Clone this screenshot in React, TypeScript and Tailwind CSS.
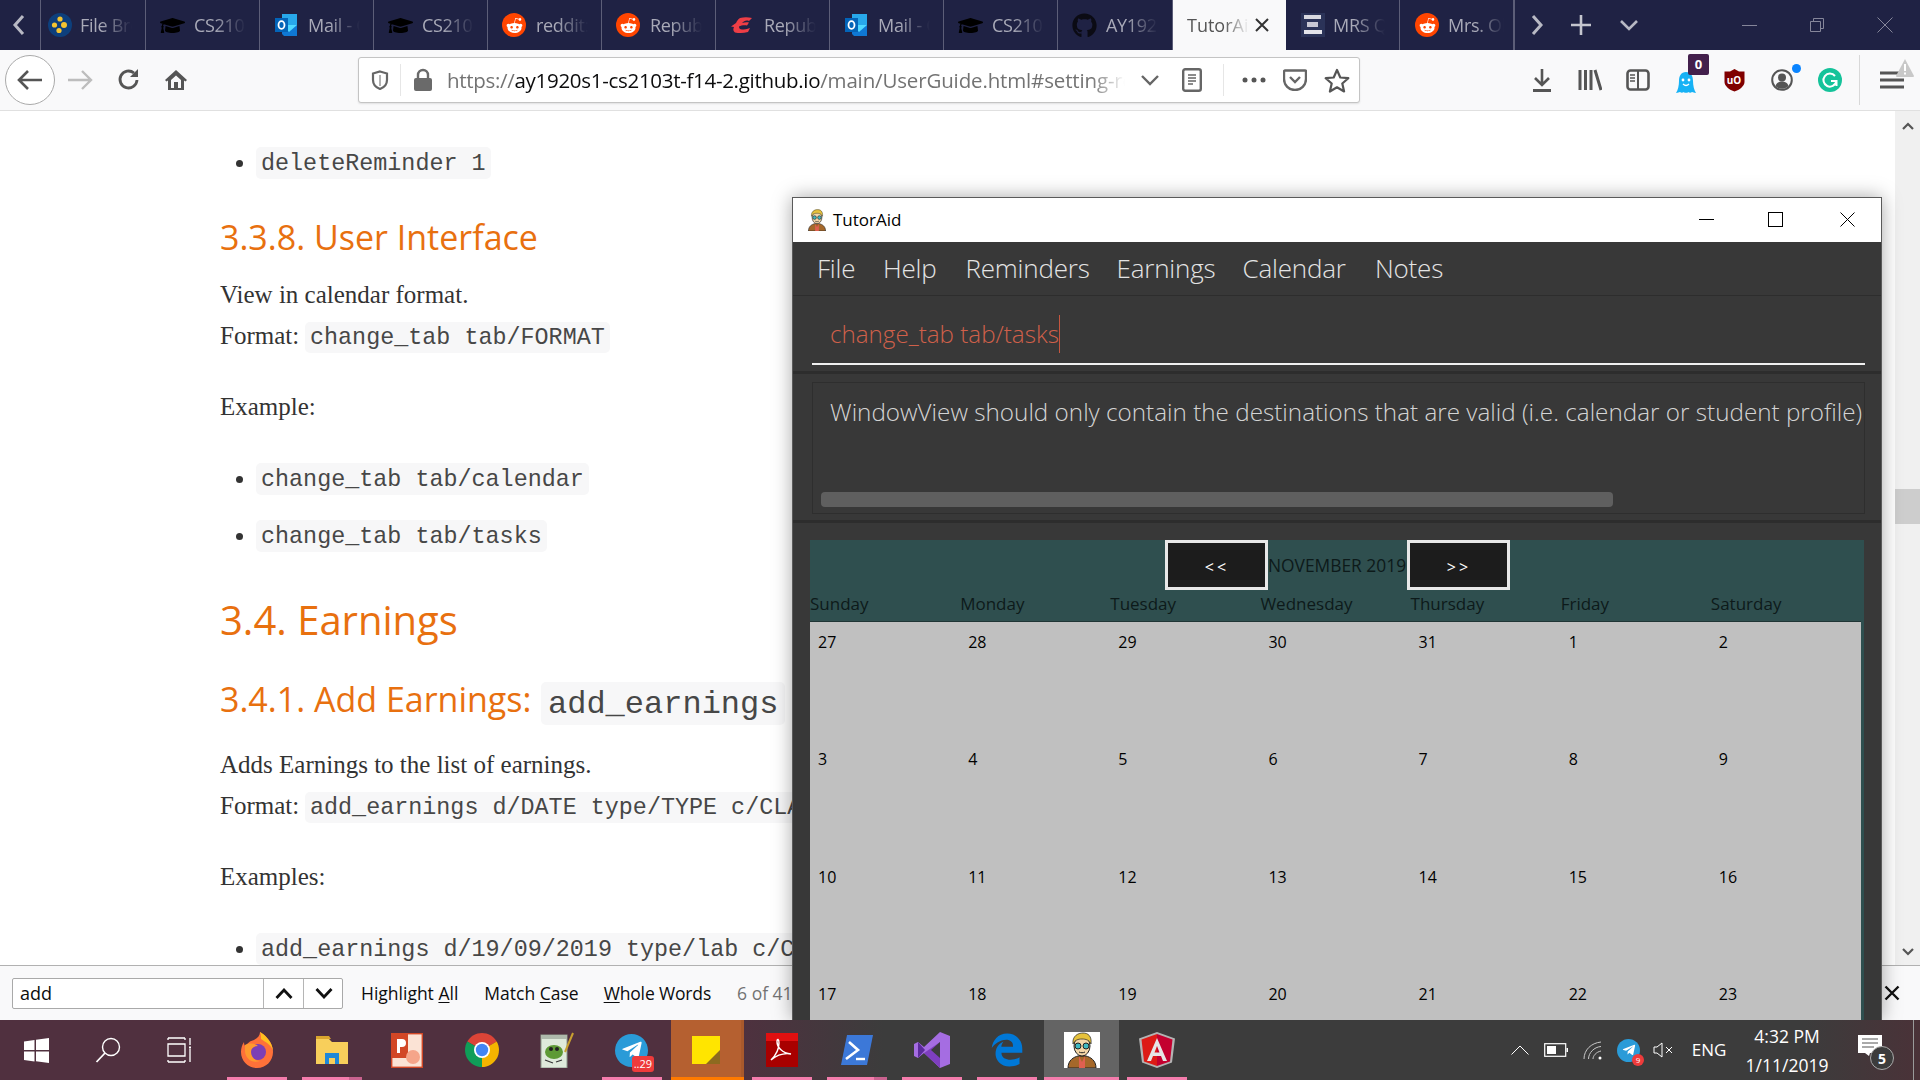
import React from "react";
import { FaGraduationCap, FaRedditAlien, FaGithub, FaTelegramPlane, FaEdgeLegacy } from "react-icons/fa";

const Svg = ({ w, h = w, vb, children, cls = "" }: { w: number; h?: number; vb?: string; children: React.ReactNode; cls?: string }) => (
  <svg width={w} height={h} viewBox={vb ?? `0 0 ${w} ${h}`} fill="none" className={`block shrink-0 ${cls}`}>{children}</svg>
);

const Reddit = () => (
  <span className="w-[24px] h-[24px] rounded-full bg-[#ff4500] flex items-center justify-center shrink-0"><FaRedditAlien className="text-white text-[17px]" /></span>
);
const Outlook = () => (
  <Svg w={24} h={24}>
    <path d="M8 1h15v11H8z" fill="#28a8ea" />
    <path d="M8 12h15v11H10l-2-2z" fill="#0f78d4" />
    <path d="M8 12l15 0-8 7z" fill="#50d9ff" />
    <rect x="1" y="5" width="13" height="14" fill="#0364b8" />
    <ellipse cx="7.5" cy="12" rx="3" ry="3.8" stroke="#fff" strokeWidth="1.8" />
  </Svg>
);
const Cap = () => <FaGraduationCap className="text-black text-[25px] shrink-0" />;
const FileBrowser = () => (
  <Svg w={24} h={24}>
    <circle cx="12" cy="12" r="12" fill="#0d3f7c" />
    <circle cx="12" cy="6" r="2.6" fill="#f4c430" /><circle cx="6.5" cy="12" r="2.6" fill="#f4c430" /><circle cx="16" cy="12" r="3" fill="#f4c430" /><circle cx="11" cy="17.5" r="2.6" fill="#f4c430" />
  </Svg>
);
const Era = () => (
  <Svg w={22} h={16}>
    <path d="M9 1c4-1 8-1 12 0l-3 3C15 3 13 4 11 6c3-1 5-1 7-.500l-2 3c-3-.500-6 0-8 1 0 2 1 3 3 3s5-.500 8-1.500l-2 4c-5 1-10 1.500-13 .500C2 14 2 12 3 10L0 9.500 5 6c1-2 2-4 4-5z" fill="#ee3e46" />
  </Svg>
);
const MrsIcon = () => (
  <Svg w={24} h={24}>
    <rect width="24" height="24" fill="#2b3358" />
    <rect x="3" y="2" width="17" height="4" fill="#d8d8e0" /><rect x="6" y="9" width="11" height="5" fill="#c8c8d4" /><rect x="3" y="17" width="18" height="4" fill="#e4e4ea" />
  </Svg>
);

const tabs = [
  { n: "File Browser", i: <FileBrowser />, w: 105 },
  { n: "CS2103T", i: <Cap />, w: 114 },
  { n: "Mail - Outlook", i: <Outlook />, w: 114 },
  { n: "CS2103T", i: <Cap />, w: 114 },
  { n: "reddit: the", i: <Reddit />, w: 114 },
  { n: "Republic", i: <Reddit />, w: 114 },
  { n: "Republic", i: <Era />, w: 114 },
  { n: "Mail - Outlook", i: <Outlook />, w: 114 },
  { n: "CS2103T", i: <Cap />, w: 114 },
  { n: "AY1920S1", i: <FaGithub className="text-[#0b0b14] text-[25px] shrink-0" />, w: 115 },
];

const Tab = ({ n, i, w }: { n: string; i: React.ReactNode; w: number }) => (
  <div style={{ width: w }} className={`h-[50px] shrink-0 flex items-center border-r border-[#5c5e78] ${w === 105 ? "pl-[6px]" : "pl-[13px]"}`}>
    <span className="w-[24px] ml-[1px] flex justify-center">{i}</span>
    <span className={`w-[52px] overflow-hidden whitespace-nowrap text-[18px] tracking-[-0.3px] text-[#a9aab8] [mask-image:linear-gradient(to_right,black_40%,transparent)] ${w === 105 ? "ml-[8px]" : "ml-[10px]"}`}>{n}</span>
  </div>
);

const TabBar = () => (
  <div className="h-[50px] bg-[#1f2244] flex shrink-0">
    <div className="w-[41px] flex items-center justify-center border-r border-[#5c5e78] pr-[3px]">
      <Svg w={14} h={22}><path d="M11 2L3 11l8 9" stroke="#b8b9c4" strokeWidth="3" /></Svg>
    </div>
    {tabs.map((t, k) => <Tab key={k} {...t} />)}
    <div className="w-[113px] h-[50px] shrink-0 bg-[#f9f9fa] flex items-center pl-[14px]">
      <span className="w-[62px] overflow-hidden whitespace-nowrap text-[18px] text-[#555] [mask-image:linear-gradient(to_right,black_60%,transparent)]">TutorAid</span>
      <Svg w={16} h={16} cls="ml-[5px]"><path d="M2 2l12 12M14 2L2 14" stroke="#333" strokeWidth="2" /></Svg>
    </div>
    <div className="w-[114px] h-[50px] shrink-0 flex items-center pl-[15px] border-r border-[#5c5e78]">
      <MrsIcon />
      <span className="ml-[8px] w-[52px] overflow-hidden whitespace-nowrap text-[18px] tracking-[-0.3px] text-[#a9aab8] [mask-image:linear-gradient(to_right,black_40%,transparent)]">MRS Quiz</span>
    </div>
    <div className="w-[115px] h-[50px] shrink-0 flex items-center pl-[15px] border-r-2 border-[#5c5e78]">
      <Reddit />
      <span className="ml-[9px] w-[56px] overflow-hidden whitespace-nowrap text-[18px] tracking-[-0.3px] text-[#a9aab8] [mask-image:linear-gradient(to_right,black_50%,transparent)]">Mrs. Obama</span>
    </div>
    <div className="w-[22px] ml-[11px] flex items-center justify-center"><Svg w={14} h={22}><path d="M3 2l8 9-8 9" stroke="#b8b9c4" strokeWidth="3" /></Svg></div>
    <div className="w-[24px] ml-[21px] flex items-center justify-center"><Svg w={22} h={22}><path d="M11 1v20M1 11h20" stroke="#c4c5ce" strokeWidth="2.6" /></Svg></div>
    <div className="w-[24px] ml-[24px] flex items-center justify-center"><Svg w={20} h={12}><path d="M2 2l8 8 8-8" stroke="#b8b9c4" strokeWidth="2.6" /></Svg></div>
    <div className="ml-[101px] flex items-center"><span className="w-[15px] h-[1px] bg-[#85869a]" /></div>
    <div className="ml-[53px] flex items-center"><Svg w={14} h={14}><path d="M3.5 3V.5h10v10H11M.5 3.5h10v10H.5z" stroke="#85869a" /></Svg></div>
    <div className="ml-[53px] flex items-center"><Svg w={16} h={16}><path d="M.5.5l15 15M15.5.5l-15 15" stroke="#85869a" /></Svg></div>
  </div>
);

const Slot = ({ w, children, cls = "" }: { w: number; children?: React.ReactNode; cls?: string }) => (
  <div style={{ width: w }} className={`shrink-0 flex items-center justify-center ${cls}`}>{children}</div>
);

const Toolbar = () => (
  <div className="h-[61px] bg-[#f9f9fa] border-b border-[#e0e0e0] flex items-center shrink-0 relative">
    <div className="ml-[5px] w-[50px] h-[50px] rounded-full border border-[#aaa] bg-white flex items-center justify-center shrink-0">
      <Svg w={26} h={22}><path d="M25 11H3M11 2l-9 9 9 9" stroke="#555" strokeWidth="2.6" /></Svg>
    </div>
    <Slot w={50}><Svg w={26} h={22}><path d="M1 11h22M15 2l9 9-9 9" stroke="#bdbdbd" strokeWidth="2.4" /></Svg></Slot>
    <Slot w={47}><Svg w={24} h={24}><path d="M20 12a8.5 8.5 0 1 1-3-7" stroke="#555" strokeWidth="2.8" /><path d="M21 1v8h-8z" fill="#555" /></Svg></Slot>
    <Slot w={48}><Svg w={24} h={24}><path d="M12 2L1 12l1.5 1.5L4 12.4V22h16v-9.6l1.5 1.1L23 12zM7 20v-8l5-4.5 5 4.5v8h-3v-6h-4v6z" fill="#555" /></Svg></Slot>
    <div className="ml-[158px] w-[1002px] h-[46px] bg-white border border-[#c4c4c4] rounded-[3px] shadow-[0_1px_2px_rgba(0,0,0,0.1)] flex items-center shrink-0">
      <Slot w={41}><Svg w={18} h={20}><path d="M9 1.5l7 2v6.5c0 4.5-3 7.5-7 9-4-1.500-7-4.500-7-9V3.500z" stroke="#666" strokeWidth="2.2" /><path d="M9 5v11" stroke="#666" strokeWidth="1" /></Svg></Slot>
      <span className="w-[1px] h-[32px] bg-[#e6e6e6]" />
      <Slot w={43}><Svg w={20} h={24}><path d="M5 11V7a5 5 0 0 1 10 0v4" stroke="#6a6a6a" strokeWidth="2.4" /><rect x="1" y="10" width="18" height="13" rx="2" fill="#6a6a6a" /></Svg></Slot>
      <div className="ml-[3px] w-[678px] overflow-hidden whitespace-nowrap text-[20.5px] tracking-[-0.3px] text-[#737373] [mask-image:linear-gradient(to_right,black_95%,transparent)]">https://<span className="text-[#0c0c0d]">ay1920s1-cs2103t-f14-2.github.io</span><span className="tracking-[-0.15px]">/main/UserGuide.html#setting-reminders</span></div>
      <Slot w={50}><Svg w={18} h={11}><path d="M1 1l8 8 8-8" stroke="#666" strokeWidth="2.4" /></Svg></Slot>
      <Slot w={34}><Svg w={20} h={24}><rect x="1.200" y="1.200" width="17.600" height="21.600" rx="2" stroke="#666" strokeWidth="2.4" /><path d="M6 7h8M6 10h8M6 13h8M6 16h5" stroke="#666" strokeWidth="1.300" /></Svg></Slot>
      <span className="ml-[14px] w-[1px] h-[32px] bg-[#e6e6e6]" />
      <Slot w={59}><Svg w={24} h={6}><circle cx="3" cy="3" r="2.500" fill="#555" /><circle cx="12" cy="3" r="2.500" fill="#555" /><circle cx="21" cy="3" r="2.500" fill="#555" /></Svg></Slot>
      <Slot w={24}><Svg w={24} h={22}><path d="M2 1.500h20a1 1 0 0 1 1 1V10A11 11 0 0 1 1 10V2.500a1 1 0 0 1 1-1z" stroke="#666" strokeWidth="2.400" /><path d="M7 8l5 5 5-5" stroke="#666" strokeWidth="2.400" /></Svg></Slot>
      <Slot w={41} cls="ml-[9px]"><Svg w={26} h={25}><path d="M13 2l3.300 7.500 8 .7-6 5.300 1.800 8L13 19.300 5.900 23.500l1.800-8-6-5.300 8-.7z" stroke="#555" strokeWidth="2.200" strokeLinejoin="round" /></Svg></Slot>
    </div>
    <div className="flex-1" />
    <Slot w={48}><Svg w={20} h={24}><path d="M10 1v15M3 10l7 7 7-7" stroke="#555" strokeWidth="2.600" /><path d="M1 22.500h18" stroke="#555" strokeWidth="3" /></Svg></Slot>
    <Slot w={48}><Svg w={24} h={22}><path d="M2 1v20M7.500 1v20M13 1v20M17 1l6 20" stroke="#555" strokeWidth="3" /></Svg></Slot>
    <Slot w={48}><Svg w={24} h={22}><rect x="1.500" y="1.500" width="21" height="19" rx="3" stroke="#555" strokeWidth="2.600" /><path d="M12 2v18" stroke="#555" strokeWidth="2" /><path d="M4 6h5M4 9h5M4 12h5" stroke="#555" strokeWidth="1.300" /></Svg></Slot>
    <Slot w={48}>
      <div className="relative w-[20px] h-[24px] mt-[6px]">
        <Svg w={20} h={24}><path d="M10 1c5 0 7 4 7 9 0 4 1 9 3 12-2 0-3-1-4-1-1 1-3 1-3 0-1 1-5 1-6 0 0 1-2 1-3 0-1 0-2 1-4 1 2-3 3-8 3-12 0-5 2-9 7-9z" fill="#17b2f5" /><circle cx="7" cy="9" r="1.400" fill="#fff" /><circle cx="13" cy="9" r="1.400" fill="#fff" /><path d="M7 13c2 2 4 2 6 0" stroke="#fff" strokeWidth="1.200" /></Svg>
        <span className="absolute left-[12px] top-[-17px] w-[21px] h-[21px] bg-[#43204c] rounded-[2px] text-white text-[13px] font-bold flex items-center justify-center">0</span>
      </div>
    </Slot>
    <Slot w={48}>
      <div className="relative w-[21px] h-[24px]">
        <Svg w={21} h={24}><path d="M10.500 1L15 3.500h5.500V14c0 4-5 8-10 9.500C5.500 22 .5 18 .5 14V3.500H6z" fill="#800000" /></Svg>
        <span className="absolute inset-0 flex items-center justify-center text-white text-[10px] font-bold">uO</span>
      </div>
    </Slot>
    <Slot w={48}>
      <div className="relative">
        <Svg w={22} h={22}><circle cx="11" cy="11" r="9.800" stroke="#555" strokeWidth="2" /><circle cx="11" cy="8.500" r="4" fill="#555" /><path d="M4.500 17c1-3.500 4-4.500 6.500-4.500s5.500 1 6.500 4.500c-2 2-4 2.700-6.500 2.700S6.500 19 4.500 17z" fill="#555" /></Svg>
        <span className="absolute right-[-8px] top-[-5px] w-[9px] h-[9px] rounded-full bg-[#0a84ff]" />
      </div>
    </Slot>
    <Slot w={48}><Svg w={24} h={24}><circle cx="12" cy="12" r="12" fill="#15c39a" /><path d="M17 8a6.500 6.500 0 1 0 1.300 5.500M13 13h5.500v5" stroke="#fff" strokeWidth="2" /></Svg></Slot>
    <span className="ml-[5px] w-[1px] h-[50px] bg-[#d8d8d8] shrink-0" />
    <Slot w={26} cls="ml-[19px] mr-[15px]"><Svg w={26} h={20}><path d="M1 3h24M1 10h24M1 17h24" stroke="#555" strokeWidth="3" /></Svg></Slot>
    <div className="absolute right-[6px] top-[9px]">
      <Svg w={18} h={18}><path d="M9 0l9 17a1 1 0 0 1-1 1H1a1 1 0 0 1-1-1z" fill="#c8c8c8" /><path d="M9 5v7M9 13.500v2" stroke="#fff" strokeWidth="2" /></Svg>
    </div>
  </div>
);

const Code = ({ children, cls = "" }: { children: React.ReactNode; cls?: string }) => (
  <code className={`font-['Liberation_Mono',monospace] bg-[#f7f7f8] rounded-[5px] text-[#474747] whitespace-nowrap ${cls}`}>{children}</code>
);
const Bullet = ({ children, mt }: { children: React.ReactNode; mt: string }) => (
  <div className={`flex items-center h-[32px] ${mt}`}>
    <span className="ml-[16px] mr-[13px] w-[7px] h-[7px] rounded-full bg-[#333] shrink-0" />
    <Code cls="h-[32px] leading-[34px] px-[5px] text-[23.4px]">{children}</Code>
  </div>
);
const P = ({ children, mt }: { children: React.ReactNode; mt: string }) => (
  <div className={`h-[34px] leading-[34px] font-['Liberation_Serif',serif] text-[25px] text-[#333] ${mt} whitespace-nowrap`}>{children}</div>
);
const Fmt = ({ children, mt }: { children: React.ReactNode; mt: string }) => (
  <div className={`h-[31px] flex items-center font-['Liberation_Serif',serif] text-[25px] text-[#333] ${mt} whitespace-nowrap`}>
    <span className="w-[85px] shrink-0 -mt-[4px]">Format:</span>
    <Code cls="h-[31px] leading-[33px] px-[5px] text-[23.4px]">{children}</Code>
  </div>
);

const Doc = () => (
  <div className="flex-1 min-w-0 bg-white overflow-hidden pl-[220px]">
    <Bullet mt="mt-[36px]">deleteReminder 1</Bullet>
    <div className="mt-[35px] h-[46px] leading-[46px] text-[34px] text-[#e8700f] whitespace-nowrap">3.3.8. User Interface</div>
    <P mt="mt-[18px]">View in calendar format.</P>
    <Fmt mt="mt-[10px]">change_tab tab/FORMAT</Fmt>
    <P mt="mt-[37px]">Example:</P>
    <Bullet mt="mt-[39px]">change_tab tab/calendar</Bullet>
    <Bullet mt="mt-[25px]">change_tab tab/tasks</Bullet>
    <div className="mt-[40px] h-[56px] leading-[56px] text-[40px] text-[#e8700f] whitespace-nowrap">3.4. Earnings</div>
    <div className="mt-[34px] h-[43px] flex items-center text-[34px] text-[#e8700f] whitespace-nowrap">
      <span className="w-[321px] shrink-0 -mt-[9px]">3.4.1. Add Earnings:</span>
      <Code cls="h-[43px] leading-[45px] px-[7px] text-[32px]">add_earnings</Code>
    </div>
    <P mt="mt-[23px]">Adds Earnings to the list of earnings.</P>
    <Fmt mt="mt-[10px]">add_earnings d/DATE type/TYPE c/CLASSID</Fmt>
    <P mt="mt-[37px]">Examples:</P>
    <Bullet mt="mt-[39px]">add_earnings d/19/09/2019 type/lab c/CS2103T</Bullet>
  </div>
);

const PageScroll = () => (
  <div className="w-[25px] bg-[#f0f0f0] flex flex-col items-center shrink-0">
    <Svg w={12} h={8} cls="mt-[11px]"><path d="M1 7l5-5 5 5" stroke="#555" strokeWidth="2.200" /></Svg>
    <div className="mt-[359px] w-full h-[35px] bg-[#cdcdcd]" />
    <div className="flex-1" />
    <Svg w={12} h={8} cls="mb-[9px]"><path d="M1 1l5 5 5-5" stroke="#555" strokeWidth="2.200" /></Svg>
  </div>
);

const Check = ({ a, u, b, ml, cls = "" }: { a: string; u: string; b: string; ml: string; cls?: string }) => (
  <span className={`${ml} ${cls} text-[17.5px] text-[#0c0c0d] whitespace-nowrap`}>{a}<span className="underline underline-offset-2">{u}</span>{b}</span>
);

const FindBar = () => (
  <div className="h-[55px] bg-[#f9f9fa] border-t border-[#b1b1b1] flex items-center shrink-0 relative">
    <div className="ml-[12px] w-[331px] h-[31px] bg-white border border-[#a9a9a9] rounded-[2px] flex items-center shrink-0">
      <span className="ml-[7px] flex-1 text-[18px] text-[#0c0c0d]">add</span>
      <Slot w={40} cls="h-full border-l border-[#b5b5b5]"><Svg w={18} h={11}><path d="M1.500 10L9 2l7.500 8" stroke="#111" strokeWidth="2.800" /></Svg></Slot>
      <Slot w={39} cls="h-full border-l border-[#b5b5b5] pl-[2px]"><Svg w={18} h={11}><path d="M1.500 1L9 9l7.500-8" stroke="#111" strokeWidth="2.800" /></Svg></Slot>
    </div>
    <Check ml="ml-[18px]" a="Highlight " u="A" b="ll" />
    <Check ml="ml-[26px]" a="Match " u="C" b="ase" />
    <Check ml="ml-[25px]" cls="tracking-[-0.15px]" a="" u="W" b="hole Words" />
    <span className="ml-[26px] text-[17.5px] text-[#737373] whitespace-nowrap">6 of 41</span>
    <div className="absolute right-[20px] top-[19px]"><Svg w={16} h={16}><path d="M1.500 1.500l13 13M14.500 1.500l-13 13" stroke="#111" strokeWidth="2.400" /></Svg></div>
  </div>
);

const Avatar = ({ s, bg = false }: { s: number; bg?: boolean }) => (
  <Svg w={s} h={s} vb="0 0 36 36">
    {bg && <rect width="36" height="36" fill="#fff" />}
    <path d="M4 36c0-8 6-11 10-12h8c4 1 10 4 10 12z" fill="#a5682a" stroke="#222" />
    <path d="M15 24l3 6 3-6v12h-6z" fill="#e06050" />
    <ellipse cx="18" cy="14" rx="8" ry="10" fill="#f3d6a8" stroke="#222" />
    <path d="M9 12C8 4 14 1 19 1s9 3 8 11c-2-4-5-5-9-5s-7 1-9 5z" fill="#e6c23c" stroke="#222" strokeWidth=".7" />
    <circle cx="14" cy="14" r="3" fill="#3fb8c0" stroke="#222" /><circle cx="22" cy="14" r="3" fill="#3fb8c0" stroke="#222" />
    <path d="M15 20c2 1 4 1 6 0" stroke="#222" />
  </Svg>
);

const menus = [
  { t: "File", w: 66 },
  { t: "Help", w: 82.5 },
  { t: "Reminders", w: 151 },
  { t: "Earnings", w: 126 },
  { t: "Calendar", w: 132.5 },
  { t: "Notes", w: 80 },
];
const rows = [
  [27, 28, 29, 30, 31, 1, 2],
  [3, 4, 5, 6, 7, 8, 9],
  [10, 11, 12, 13, 14, 15, 16],
  [17, 18, 19, 20, 21, 22, 23],
];
const days = ["Sunday", "Monday", "Tuesday", "Wednesday", "Thursday", "Friday", "Saturday"];

const TutorWindow = () => (
  <div className="absolute left-[792px] top-[197px] w-[1090px] h-[823px] z-10 bg-[#383838] border-l border-r border-t border-[#5a5a5a] shadow-[0_0_18px_rgba(0,0,0,0.35)] flex flex-col overflow-hidden">
    <div className="h-[44px] bg-white flex items-center shrink-0">
      <span className="ml-[13px]"><Avatar s={22} /></span>
      <span className="ml-[5px] text-[17px] text-black">TutorAid</span>
      <div className="flex-1" />
      <span className="w-[15px] h-[1px] bg-black -mt-[1px]" />
      <span className="ml-[54px] w-[15px] h-[15px] border border-black -mt-[1px]" />
      <span className="ml-[57px] mr-[26px] -mt-[1px]"><Svg w={15} h={15}><path d="M.5.5l14 14M14.500.5l-14 14" stroke="#000" /></Svg></span>
    </div>
    <div className="h-[54px] flex items-center pl-[24px] border-b border-[#2d2d2d] shrink-0">
      {menus.map((m) => (
        <span key={m.t} style={{ width: m.w }} className="shrink-0 text-[26px] font-light text-[#e4e4e4] whitespace-nowrap tracking-[-0.2px]">{m.t}</span>
      ))}
    </div>
    <div className="h-[78px] pl-[19px] pr-[16px] border-b-[3px] border-[#2d2d2d] shrink-0 flex flex-col">
      <div className="h-[69px] pt-[9px] border-b-2 border-[#f0f0f0] pl-[18px] flex items-center">
        <span className="text-[24.2px] font-light text-[#d0604a] whitespace-nowrap">change_tab tab/tasks</span>
        <span className="w-[1px] h-[38px] bg-[#c5563f]" />
      </div>
    </div>
    <div className="h-[149px] pt-[8px] pl-[19px] pr-[16px] border-b-[3px] border-[#2d2d2d] shrink-0">
      <div className="h-[132px] border border-[#2e2e2e] flex flex-col overflow-hidden">
        <div className="h-[58px] flex items-center pl-[17px] text-[24.25px] font-light text-[#d4d4d4] whitespace-nowrap">WindowView should only contain the destinations that are valid (i.e. calendar or student profile)</div>
        <div className="mt-[51px] ml-[8px] w-[792px] h-[15px] rounded-[4px] bg-[#5f5f5f]" />
      </div>
    </div>
    <div className="flex-1 min-h-0 pt-[17px] pl-[17px] pr-[17px] overflow-hidden">
      <div className="bg-[#2f4f4f] pr-[3px] h-full flex flex-col">
        <div className="h-[50px] flex items-stretch justify-center shrink-0 pl-[3px]">
          <div className="w-[103px] bg-[#1c1c1c] border-[3px] border-[#e8e8e8] flex items-center justify-center pt-[3px] pl-[2px] text-[16px] text-white tracking-[3px]">&lt;&lt;</div>
          <div className="w-[139px] flex items-center justify-center text-[17.4px] text-[#0d1a1a] whitespace-nowrap">NOVEMBER 2019</div>
          <div className="w-[103px] bg-[#1c1c1c] border-[3px] border-[#e8e8e8] flex items-center justify-center pt-[3px] pl-[2px] text-[16px] text-white tracking-[3px]">&gt;&gt;</div>
        </div>
        <div className="h-[32px] pb-[3px] grid grid-cols-7 items-center shrink-0 border-b border-[#1f3535]">
          {days.map((d) => <span key={d} className="text-[17px] text-[#0d1a1a] whitespace-nowrap">{d}</span>)}
        </div>
        <div className="bg-[#c0c0c0] flex flex-col">
          {rows.map((r, k) => (
            <div key={k} className="h-[117.3px] grid grid-cols-7 shrink-0">
              {r.map((n) => <span key={n} className="pl-[8px] pt-[8px] text-[16px] leading-[24px] text-black">{n}</span>)}
            </div>
          ))}
        </div>
      </div>
    </div>
  </div>
);

const Under = ({ dark = false }: { dark?: boolean }) => (
  <span className="absolute bottom-0 left-[8px] w-[60px] h-[3px] bg-[#f47cac]">
    {dark && <span className="absolute right-0 top-0 w-[13px] h-full bg-[#c9628f]" />}
  </span>
);
const TaskSlot = ({ children, active, cls = "", dark, under = true }: { children: React.ReactNode; active?: string; cls?: string; dark?: boolean; under?: boolean }) => (
  <div className={`relative w-[75px] h-[60px] shrink-0 flex items-center justify-center ${active ?? ""} ${cls}`}>
    {children}
    {under && <Under dark={dark} />}
  </div>
);

const Taskbar = () => (
  <div className="relative z-20 h-[60px] bg-[linear-gradient(to_right,#50303f_0%,#50303f_38%,#3c3c3c_46%,#3c3c3c_94%,#4a3238_100%)] flex shrink-0">
    <Slot w={72}><Svg w={25} h={25}><path d="M0 3.500L10.500 2v10H0zM12 1.800L25 0v12H12zM0 13.500h10.500v10L0 22zM12 13.500h13V25l-13-1.800z" fill="#fff" /></Svg></Slot>
    <Slot w={71}><Svg w={26} h={26}><circle cx="16" cy="10" r="8.500" stroke="#fff" strokeWidth="1.400" /><path d="M10 16L1.500 25" stroke="#fff" strokeWidth="1.800" /></Svg></Slot>
    <Slot w={71}><Svg w={24} h={26}><path d="M1 1h17M1 25h17M1 7h17v12H1zM1 3v-2M18 3v-2M1 25v-2M18 25v-2M23 1v7M23 12v13" stroke="#fff" strokeWidth="1.300" /><rect x="22" y="9.500" width="2" height="2" fill="#fff" /></Svg></Slot>
    <div className="w-[5px] shrink-0" />
    <TaskSlot>
      <Svg w={34} h={36}>
        <path d="M17 36C8 36 1 29 1 20c0-4 1-7 3-10 0 3 1 4 2 5 1-4 4-6 8-7 4-2 6-5 6-8 3 2 5 3 8 7 4 5 5 9 5 13 0 9-7 16-16 16z" fill="#ff7139" />
        <path d="M20 0c5 3 12 9 13 19-2-7-8-9-12-12 0-2 0-5-1-7z" fill="#ffc01f" />
        <circle cx="18" cy="20" r="8" fill="#7c3fb5" />
        <path d="M5 13c4-2 10-2 13 1-4 0-7 2-7 6 0 5 4 9 9 9-8 3-15-3-15-10z" fill="#ff9a2e" />
      </Svg>
    </TaskSlot>
    <TaskSlot dark>
      <Svg w={32} h={28}>
        <path d="M0 3h13l3 3h16v22H0z" fill="#f8cf5b" /><path d="M0 0h13l2 3H0z" fill="#d9a52e" />
        <path d="M9 28V17h14v11h-4v-6h-6v6z" fill="#1e88d8" />
      </Svg>
    </TaskSlot>
    <TaskSlot under={false}>
      <Svg w={32} h={35}>
        <rect x=".7" y=".7" width="30.600" height="33.600" fill="#fbe3d5" stroke="#d24726" strokeWidth="1.400" />
        <rect x="1" y="1" width="16" height="24" fill="#d24726" />
        <path d="M6 20V6h5a4 4 0 0 1 0 8H9v6z" fill="#fff" />
        <circle cx="22" cy="24" r="7" fill="#f5a58a" />
      </Svg>
    </TaskSlot>
    <TaskSlot under={false}>
      <Svg w={34} h={34}>
        <path d="M17 17L2.300 8.500A17 17 0 0 1 31.700 8.500z" fill="#db4437" />
        <path d="M17 17L2.300 8.500A17 17 0 0 0 17 34z" fill="#0f9d58" />
        <path d="M17 17L31.700 8.500A17 17 0 0 1 17 34z" fill="#f4b400" />
        <circle cx="17" cy="17" r="8" fill="#fff" /><circle cx="17" cy="17" r="6.200" fill="#4285f4" />
      </Svg>
    </TaskSlot>
    <TaskSlot under={false}>
      <Svg w={34} h={36}>
        <rect x="1" y="3" width="26" height="33" fill="#dfeadb" stroke="#8d9a8c" />
        <path d="M1 3h26v4H1z" fill="#aeb9ab" />
        <ellipse cx="14" cy="20" rx="9" ry="7" fill="#5e9a35" /><circle cx="11" cy="17" r="2" fill="#222" /><circle cx="17" cy="17" r="2" fill="#222" />
        <path d="M5 28l8 3M16 30l6-2" stroke="#333" strokeWidth="1.200" />
        <path d="M25 20L33 1" stroke="#c8a030" strokeWidth="2" />
      </Svg>
    </TaskSlot>
    <TaskSlot>
      <div className="relative w-[33px] h-[33px] rounded-full bg-[#2a9bd8] flex items-center justify-center">
        <FaTelegramPlane className="text-white text-[22px]" />
        <span className="absolute right-[-6px] bottom-[-5px] h-[16px] px-[2px] rounded-[3px] bg-[#ee3b3b] text-white text-[11px] leading-[16px] whitespace-nowrap">..29</span>
      </div>
    </TaskSlot>
    <div className="relative w-[73px] h-[60px] ml-[2px] shrink-0 bg-[#b56030] flex items-center justify-center border-r-[3px] border-[#a9592c]">
      <Svg w={28} h={28}><rect width="28" height="28" fill="#ffe500" /><path d="M28 14v14H14z" fill="#8d6a1f" /></Svg>
      <span className="absolute bottom-0 left-0 right-[-3px] h-[3px] bg-[#ff7a00]" />
    </div>
    <TaskSlot>
      <Svg w={32} h={34}>
        <rect width="32" height="34" fill="#a80000" /><rect width="32" height="8" fill="#e01010" />
        <path d="M5 27c5-5 8-12 8-17 0-4-2-5-2-1 0 5 5 11 14 12-6-1-14 1-20 6z" stroke="#fff" strokeWidth="1.400" />
      </Svg>
    </TaskSlot>
    <TaskSlot dark>
      <Svg w={34} h={32}>
        <path d="M7 1h26L27 31H1z" fill="#3c78d8" />
        <path d="M9 8l9 8-12 9" stroke="#fff" strokeWidth="2.600" /><path d="M16 25h9" stroke="#fff" strokeWidth="2.400" />
      </Svg>
    </TaskSlot>
    <TaskSlot>
      <Svg w={36} h={36}>
        <path d="M26 0l10 4v28l-10 4-16-15-6 5-4-2V12l4-2 6 5z" fill="#a56de2" />
        <path d="M26 0v36L10 21l16-11z" fill="#7e3fbf" />
        <path d="M4 10v16l7-8z" fill="#5b2a9b" />
        <path d="M26 10L17 18l9 8z" fill="#3c3c3c" />
      </Svg>
    </TaskSlot>
    <TaskSlot><FaEdgeLegacy className="text-[#0078d7] text-[34px]" /></TaskSlot>
    <TaskSlot active="bg-[#646464]" under={false}>
      <Avatar s={36} bg />
      <span className="absolute bottom-0 left-0 w-full h-[3px] bg-[#f47cac]" />
    </TaskSlot>
    <TaskSlot>
      <Svg w={36} h={36}>
        <path d="M18 0L0 6.500l3 24L18 36l15-5.500 3-24z" fill="#b3b3b3" />
        <path d="M18 2L2.500 7.500 5 29.500 18 34z" fill="#dd1b16" /><path d="M18 2l15.500 5.500L31 29.500 18 34z" fill="#c3002f" />
        <path d="M18 6L8 29h4l2-5h8l2 5h4zM15.500 20.500L18 14l2.500 6.500z" fill="#e6e6e6" />
      </Svg>
    </TaskSlot>
    <div className="flex-1" />
    <Slot w={36}><Svg w={18} h={10}><path d="M.5 9.500L9 1l8.500 8.500" stroke="#fff" /></Svg></Slot>
    <Slot w={36}><Svg w={24} h={14}><rect x=".7" y=".7" width="21" height="12.600" stroke="#fff" strokeWidth="1.200" /><rect x="3" y="3" width="9" height="8" fill="#fff" /><rect x="22.500" y="5" width="1.500" height="4" fill="#fff" /></Svg></Slot>
    <Slot w={37}><Svg w={20} h={19}><path d="M1 18C1 9 8 2 18 1M5.500 18C5.500 12 11 6 18 5.500M10 18c0-3 3-7 8-8" stroke="#c8c8c8" strokeWidth="1" /><circle cx="17" cy="17" r="1.500" fill="#fff" /></Svg></Slot>
    <Slot w={35}>
      <div className="relative w-[23px] h-[23px] rounded-full bg-[#2a9bd8] flex items-center justify-center">
        <FaTelegramPlane className="text-white text-[14px]" />
        <span className="absolute right-[-4px] bottom-[-4px] w-[12px] h-[12px] rounded-full bg-[#ee3b3b] text-white text-[8px] leading-[12px] text-center">9</span>
      </div>
    </Slot>
    <Slot w={35}><Svg w={21} h={16}><path d="M1 5h3l5-4v14l-5-4H1z" stroke="#fff" /><path d="M13 5l6 6M19 5l-6 6" stroke="#fff" /></Svg></Slot>
    <Slot w={56}><span className="text-[17px] text-white">ENG</span></Slot>
    <div className="w-[100px] shrink-0 flex flex-col items-center justify-center gap-[7px] text-[17.5px] leading-[22px] text-white whitespace-nowrap">
      <span>4:32 PM</span><span>1/11/2019</span>
    </div>
    <Slot w={66}>
      <div className="relative w-[24px] h-[24px] -mt-[6px]">
        <Svg w={24} h={24}><path d="M0 0h24v18H12l-1 3-4-3H0z" fill="#fff" /><path d="M4 4h16M4 8h16M4 12h12" stroke="#555" /></Svg>
        <span className="absolute left-[12px] top-[11px] w-[24px] h-[24px] rounded-full bg-[#3c3c3c] border border-[#aaa] text-white text-[14px] font-bold flex items-center justify-center">5</span>
      </div>
    </Slot>
    <div className="w-[10px] shrink-0" />
    <span className="w-[1px] h-full bg-[#9a9a9a] shrink-0" />
    <div className="w-[6px] shrink-0" />
  </div>
);

export default function App() {
  return (
    <div className="relative w-[1920px] h-[1080px] overflow-hidden flex flex-col font-['Open_Sans',sans-serif] bg-white">
      <TabBar />
      <Toolbar />
      <div className="flex-1 min-h-0 flex">
        <Doc />
        <PageScroll />
      </div>
      <FindBar />
      <Taskbar />
      <TutorWindow />
    </div>
  );
}
